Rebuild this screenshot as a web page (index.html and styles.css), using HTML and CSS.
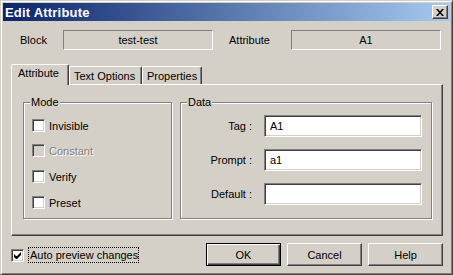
FILE: index.html
```html
<!DOCTYPE html>
<html lang="en">
<head>
    <meta charset="UTF-8">
    <title>Edit Attribute</title>
    <link rel="stylesheet" href="styles.css">
</head>
<body>
    <div class="window">
        <div class="titlebar">
            <span class="title">Edit Attribute</span>
            <button class="close-btn" aria-label="Close">
                <svg width="8" height="7" viewBox="0 0 8 7">
                    <path d="M0 0h2l2 2.5 2-2.5h2l-3 3.5 3 3.5h-2l-2-2.5-2 2.5h-2l3-3.5z" fill="#000"/>
                </svg>
            </button>
        </div>

        <div class="content">
            <div class="info-row">
                <span class="info-label">Block</span>
                <span class="static-field">test-test</span>
                <span class="info-label attr-label">Attribute</span>
                <span class="static-field">A1</span>
            </div>

            <div class="tabs">
                <div class="tab active">Attribute</div>
                <div class="tab tab-text">Text Options</div>
                <div class="tab tab-props">Properties</div>
            </div>

            <div class="tab-panel">
                <div class="group group-mode">
                    <span class="group-title">Mode</span>
                    <div class="check-list">
                        <label class="check"><span class="box"></span>Invisible</label>
                        <label class="check disabled"><span class="box"></span>Constant</label>
                        <label class="check"><span class="box"></span>Verify</label>
                        <label class="check"><span class="box"></span>Preset</label>
                    </div>
                </div>
                <div class="group group-data">
                    <span class="group-title">Data</span>
                    <div class="data-grid">
                        <label class="data-label">Tag :</label>
                        <div class="edit">A1</div>
                        <label class="data-label">Prompt :</label>
                        <div class="edit">a1</div>
                        <label class="data-label">Default :</label>
                        <div class="edit"></div>
                    </div>
                </div>
            </div>

            <div class="footer">
                <label class="check auto-preview">
                    <span class="box checked">
                        <svg width="7" height="7" viewBox="0 0 7 7">
                            <path d="M0 2v3l2 2h1l4-4v-3l-4 4h-1z" fill="#000"/>
                        </svg>
                    </span>
                    <span class="focus">Auto preview changes</span>
                </label>
                <div class="buttons">
                    <button class="btn default">OK</button>
                    <button class="btn">Cancel</button>
                    <button class="btn">Help</button>
                </div>
            </div>
        </div>
    </div>
</body>
</html>
```

FILE: styles.css
```css
body {
    margin: 0;
    padding: 0;
    font-family: "Liberation Sans", Arial, sans-serif;
    font-size: 11px;
    color: #000;
    background: #d4d0c8;
}

.window {
    width: 453px;
    height: 275px;
    box-sizing: border-box;
    background: #d4d0c8;
    border-top: 1px solid #d4d0c8;
    border-left: 1px solid #d4d0c8;
    border-right: 1px solid #404040;
    border-bottom: 1px solid #404040;
    box-shadow: inset 1px 1px 0 #fff, inset -1px -1px 0 #808080;
    padding: 2px;
}

.titlebar {
    height: 18px;
    display: flex;
    align-items: center;
    justify-content: space-between;
    background: linear-gradient(to right, #0a246a, #a6caf0);
    padding: 0 2px 0 2px;
}

.title {
    color: #fff;
    font-weight: bold;
    font-size: 13px;
    letter-spacing: 0.2px;
}

.close-btn {
    width: 16px;
    height: 14px;
    padding: 0;
    margin: 0;
    box-sizing: border-box;
    background: #d4d0c8;
    border-top: 1px solid #fff;
    border-left: 1px solid #fff;
    border-right: 1px solid #404040;
    border-bottom: 1px solid #404040;
    box-shadow: inset -1px -1px 0 #808080;
    display: flex;
    align-items: center;
    justify-content: center;
}

.content {
    padding: 0 7px 0 8px;
}

.info-row {
    display: flex;
    align-items: center;
    height: 20px;
    margin-top: 9px;
}

.info-label {
    width: 43px;
    padding-left: 9px;
}

.attr-label {
    width: 62px;
    padding-left: 16px;
}

.static-field {
    width: 150px;
    height: 20px;
    box-sizing: border-box;
    border-top: 1px solid #808080;
    border-left: 1px solid #808080;
    border-right: 1px solid #fff;
    border-bottom: 1px solid #fff;
    display: flex;
    align-items: center;
    justify-content: center;
}

.tabs {
    display: flex;
    align-items: flex-end;
    height: 20px;
    margin-top: 14px;
}

.tab {
    height: 18px;
    box-sizing: border-box;
    border-top: 1px solid #fff;
    border-left: 1px solid #fff;
    border-right: 1px solid #404040;
    box-shadow: inset -1px 0 0 #808080;
    border-radius: 2px 2px 0 0;
    padding: 3px 0 0 4px;
}

.tab.active {
    width: 58px;
    height: 21px;
    margin-bottom: -1px;
    padding: 2px 0 0 6px;
    background: #d4d0c8;
    position: relative;
    z-index: 1;
}

.tab-text {
    width: 73px;
    margin-left: 0;
}

.tab-props {
    width: 60px;
}

.tab-panel {
    height: 152px;
    box-sizing: border-box;
    border-top: 1px solid #fff;
    border-left: 1px solid #fff;
    border-right: 1px solid #404040;
    border-bottom: 1px solid #404040;
    box-shadow: inset -1px -1px 0 #808080;
    padding: 17px 0 0 11px;
    display: flex;
    gap: 8px;
}

.group {
    height: 117px;
    box-sizing: border-box;
    border: 1px solid #808080;
    box-shadow: 1px 1px 0 #fff, inset 1px 1px 0 #fff;
}

.group-mode {
    width: 149px;
}

.group-data {
    width: 252px;
}

.group-title {
    display: block;
    width: max-content;
    line-height: 13px;
    margin: -7px 0 0 6px;
    padding: 0 1px;
    background: #d4d0c8;
}

.check-list {
    display: grid;
    grid-template-rows: 25px 26px 26px 13px;
    margin: 10px 0 0 8px;
}

.check {
    display: flex;
    align-items: center;
    height: 13px;
}

.box {
    width: 13px;
    height: 13px;
    box-sizing: border-box;
    background: #fff;
    border-top: 1px solid #808080;
    border-left: 1px solid #808080;
    border-right: 1px solid #fff;
    border-bottom: 1px solid #fff;
    box-shadow: inset 1px 1px 0 #404040, inset -1px -1px 0 #d4d0c8;
    margin-right: 4px;
    display: flex;
    align-items: center;
    justify-content: center;
}

.check.disabled {
    color: #808080;
    text-shadow: 1px 1px 0 #fff;
}

.check.disabled .box {
    background: #d4d0c8;
}

.data-grid {
    display: grid;
    grid-template-columns: 71px 158px;
    grid-template-rows: 22px 22px 22px;
    column-gap: 12px;
    row-gap: 12px;
    margin-top: 6px;
}

.data-label {
    text-align: right;
    line-height: 22px;
}

.edit {
    height: 22px;
    box-sizing: border-box;
    background: #fff;
    border-top: 1px solid #808080;
    border-left: 1px solid #808080;
    border-right: 1px solid #fff;
    border-bottom: 1px solid #fff;
    box-shadow: inset 1px 1px 0 #404040, inset -1px -1px 0 #d4d0c8;
    padding: 0 5px;
    line-height: 20px;
}

.footer {
    display: flex;
    align-items: center;
    justify-content: space-between;
    height: 23px;
    margin-top: 7px;
}

.auto-preview {
    height: auto;
    margin-top: 1px;
}

.auto-preview .box {
    margin-right: 4px;
}

.focus {
    border: 1px dotted #000;
    padding: 1px 0 1px 1px;
    line-height: 12px;
}

.buttons {
    display: flex;
    gap: 6px;
}

.btn {
    width: 75px;
    height: 23px;
    box-sizing: border-box;
    font-family: "Liberation Sans", Arial, sans-serif;
    font-size: 11px;
    color: #000;
    background: #d4d0c8;
    border-top: 1px solid #fff;
    border-left: 1px solid #fff;
    border-right: 1px solid #404040;
    border-bottom: 1px solid #404040;
    box-shadow: inset -1px -1px 0 #808080;
    padding: 0;
}

.btn.default {
    border: 1px solid #000;
    box-shadow: inset 1px 1px 0 #fff, inset -1px -1px 0 #404040, inset -2px -2px 0 #808080;
}
```
